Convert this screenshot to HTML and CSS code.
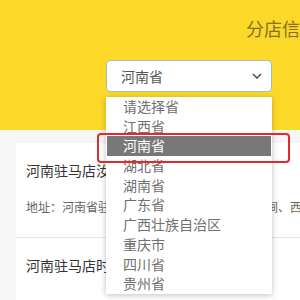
FILE: index.html
```html
<!DOCTYPE html>
<html lang="zh-CN">
<head>
    <meta charset="UTF-8">
    <meta name="viewport" content="width=device-width, initial-scale=1.0">
    <title>分店信息</title>
    <link rel="stylesheet" href="styles.css">
</head>
<body>
    <div class="header">
        <h1 class="title">分店信息</h1>
        <div class="picker">
            <span class="picker-value">河南省</span>
            <svg class="chevron" width="10" height="6" viewBox="0 0 10 6">
                <path d="M1 1 L5 5 L9 1" fill="none" stroke="#555" stroke-width="1.6"/>
            </svg>
        </div>
    </div>

    <div class="shops">
        <div class="shop">
            <div class="shop-name">河南驻马店汝南店</div>
            <div class="shop-addr">地址：河南省驻马店市汝南县汝宁大道北段溪涧、西侧</div>
        </div>
        <div class="shop">
            <div class="shop-name">河南驻马店时代广场店</div>
        </div>
    </div>

    <ul class="options">
        <li>请选择省</li>
        <li>江西省</li>
        <li class="selected">河南省</li>
        <li>湖北省</li>
        <li>湖南省</li>
        <li>广东省</li>
        <li>广西壮族自治区</li>
        <li>重庆市</li>
        <li>四川省</li>
        <li>贵州省</li>
    </ul>
    <div class="mark"></div>
</body>
</html>
```

FILE: styles.css
```css
body {
    margin: 0;
    background-color: #f6f6f6;
    font-family: "Noto Sans CJK SC", "Noto Sans", sans-serif;
    overflow: hidden;
}

.header {
    height: 130px;
    background-color: #fcd928;
    padding-top: 17px;
    box-sizing: border-box;
}

.title {
    margin: 0 0 0 246px;
    font-size: 18px;
    font-weight: normal;
    line-height: 22px;
    color: #857027;
    white-space: nowrap;
}

.picker {
    margin: 21px 0 0 106px;
    width: 166px;
    height: 32px;
    box-sizing: border-box;
    background-color: #fff;
    border: 1px solid #9fc1b0;
    border-radius: 4px;
    display: flex;
    align-items: center;
    justify-content: space-between;
    padding: 0 9px 0 14px;
}

.picker-value {
    font-size: 14px;
    color: #555;
}

.shops {
    padding: 13px 0 0 16px;
}

.shop {
    background-color: #fff;
    padding: 16px 10px 0;
    height: 95px;
    box-sizing: border-box;
    border-bottom: 1px solid #e6e6e6;
    white-space: nowrap;
    overflow: hidden;
}

.shop-name {
    font-size: 14px;
    color: #333;
    line-height: 22px;
}

.shop-addr {
    margin-top: 17px;
    font-size: 12px;
    color: #666;
    line-height: 18px;
}

.options {
    position: absolute;
    top: 97px;
    left: 106px;
    width: 166px;
    margin: 0;
    padding: 0 1px;
    box-sizing: border-box;
    list-style: none;
    background-color: #fff;
    box-shadow: 0 1px 6px rgba(0, 0, 0, 0.25);
}

.options li {
    height: 19.7px;
    line-height: 19.7px;
    padding-left: 16px;
    font-size: 14px;
    color: #707070;
}

.options li.selected {
    background-color: #787878;
    color: #fff;
}

.mark {
    position: absolute;
    top: 133px;
    left: 97px;
    width: 193px;
    height: 30px;
    box-sizing: border-box;
    border: 2px solid #e8262b;
    border-radius: 4px;
}
```
